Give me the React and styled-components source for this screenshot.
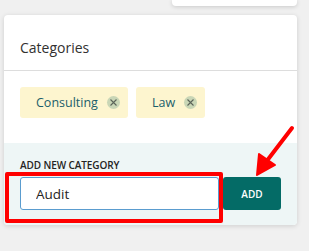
import styled, { createGlobalStyle } from 'styled-components';

const Global = createGlobalStyle`
  html, body {
    margin: 0;
    padding: 0;
    background: #f0f0f0;
    font-family: "Open Sans", "Noto Sans", sans-serif;
  }
`;

const Page = styled.div`
  position: relative;
  width: 309px;
  height: 251px;
  padding-left: 4px;
  box-sizing: border-box;
  overflow: hidden;
`;

const TopCard = styled.div`
  width: 125px;
  height: 6px;
  margin-left: 168px;
  background: #fff;
  border-radius: 0 0 4px 4px;
  box-shadow: 0 1px 4px rgba(0, 0, 0, 0.16);
`;

const Card = styled.section`
  margin-top: 9px;
  width: 293px;
  background: #fff;
  border-radius: 4px;
  box-shadow: 0 1px 5px rgba(0, 0, 0, 0.14);
  overflow: hidden;
`;

const Header = styled.h2`
  margin: 0;
  height: 56px;
  box-sizing: border-box;
  padding: 23px 16px 0;
  font-size: 14px;
  font-weight: 400;
  color: #323130;
  border-bottom: 1px solid #dddddd;
`;

const ChipList = styled.div`
  display: flex;
  gap: 8px;
  padding: 16px 16px 25px;
`;

const Chip = styled.div`
  display: flex;
  align-items: center;
  height: 31px;
  padding: 0 8px 0 16px;
  gap: 9px;
  background: #fdf5cf;
  border-radius: 3px;
  color: #1b5e6b;
  font-size: 12.5px;
`;

const Remove = styled.span`
  display: flex;
  align-items: center;
  justify-content: center;
  width: 13px;
  height: 13px;
  border-radius: 50%;
  background: #c9d6b6;
`;

const Footer = styled.div`
  background: #eef6f6;
  padding: 15px 16px 15px;
`;

const Label = styled.div`
  font-size: 10px;
  font-weight: 600;
  letter-spacing: -0.1px;
  color: #252423;
  line-height: 14px;
  margin-bottom: 5px;
`;

const Row = styled.div`
  display: flex;
  gap: 4px;
`;

const Input = styled.input`
  flex: 1;
  min-width: 0;
  height: 33px;
  box-sizing: border-box;
  border: 1px solid #5a9ccf;
  border-radius: 3px;
  padding: 0 15px;
  font-family: inherit;
  font-size: 13.5px;
  color: #252423;
  background: #fff;
  outline: none;
`;

const AddButton = styled.button`
  width: 58px;
  height: 33px;
  border: none;
  border-radius: 3px;
  background: #046b66;
  color: #fff;
  font-family: inherit;
  font-size: 10px;
  font-weight: 600;
`;

const Highlight = styled.div`
  position: absolute;
  left: 5px;
  top: 172px;
  width: 218px;
  height: 51px;
  box-sizing: border-box;
  border: 4px solid #ff0000;
  border-radius: 2px;
  pointer-events: none;
`;

const Arrow = styled.svg`
  position: absolute;
  left: 250px;
  top: 122px;
  pointer-events: none;
`;

const categories = ['Consulting', 'Law'];

export default function App() {
  return (
    <Page>
      <Global />
      <TopCard />
      <Card>
        <Header>Categories</Header>
        <ChipList>
          {categories.map((c) => (
            <Chip key={c}>
              {c}
              <Remove>
                <svg width="7" height="7" viewBox="0 0 7 7">
                  <path d="M0.5 0.5L6.5 6.5M6.5 0.5L0.5 6.5" stroke="#5b6459" strokeWidth="1.1" />
                </svg>
              </Remove>
            </Chip>
          ))}
        </ChipList>
        <Footer>
          <Label>ADD NEW CATEGORY</Label>
          <Row>
            <Input defaultValue="Audit" />
            <AddButton>ADD</AddButton>
          </Row>
        </Footer>
      </Card>
      <Highlight />
      <Arrow width="50" height="58" viewBox="0 0 50 58">
        <path d="M42 6 L16 40" stroke="#ff0000" strokeWidth="4" strokeLinecap="round" />
        <path d="M7 53 L9 32 L25 43 Z" fill="#ff0000" stroke="#ff0000" strokeWidth="2" strokeLinejoin="round" />
      </Arrow>
    </Page>
  );
}
